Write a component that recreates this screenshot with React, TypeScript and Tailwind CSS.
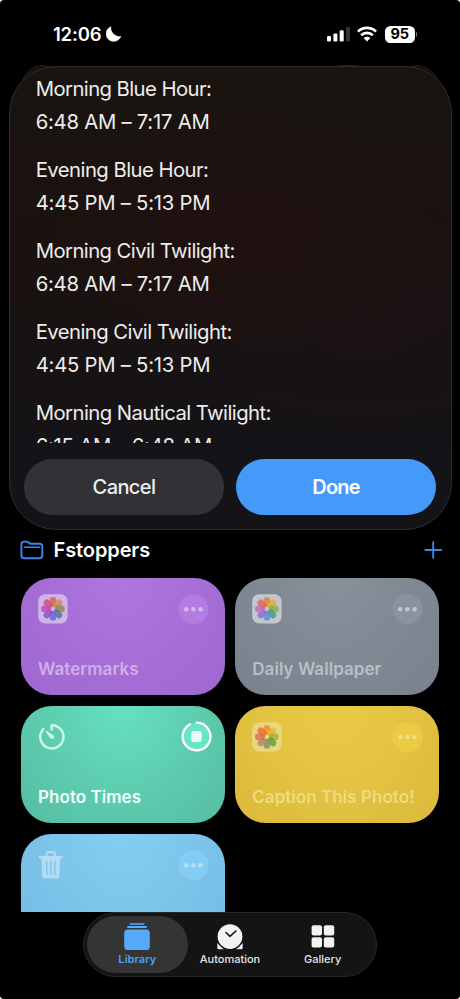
import React from "react";

const times = [
  { label: "Morning Blue Hour:", value: "6:48 AM – 7:17 AM", ls: "tracking-[-0.57px]" },
  { label: "Evening Blue Hour:", value: "4:45 PM – 5:13 PM", ls: "tracking-[-0.54px]" },
  { label: "Morning Civil Twilight:", value: "6:48 AM – 7:17 AM", ls: "tracking-[-0.57px]" },
  { label: "Evening Civil Twilight:", value: "4:45 PM – 5:13 PM", ls: "tracking-[-0.55px]" },
  { label: "Morning Nautical Twilight:", value: "6:15 AM – 6:48 AM", ls: "tracking-[-0.55px]" },
];

type Petals = string[];

const purplePetals: Petals = ["#d9694f", "#cf8f52", "#8e8a5c", "#5d7396", "#6470dc", "#8a55cf", "#c04cc0", "#cf4f8c"];
const grayPetals: Petals = ["#e08a3c", "#dcae3a", "#8fae48", "#4a9c80", "#5c8fd6", "#8a72cc", "#bf6fb8", "#d8686c"];
const yellowPetals: Petals = ["#ec9030", "#ecb62e", "#9db23c", "#6aa03a", "#84946a", "#b58a70", "#dd7458", "#e4703c"];

function PhotosIcon({ petals, tile }: { petals: Petals; tile: string }) {
  return (
    <svg width="30" height="30" viewBox="0 0 30 30">
      <rect x="0.2" y="0.2" width="29.4" height="29.4" rx="7" fill={tile} />
      {petals.map((color, i) => (
        <rect
          key={i}
          x="11.6"
          y="3"
          width="6.600"
          height="10"
          rx="3.300"
          fill={color}
          opacity="0.85"
          transform={`rotate(${i * 45} 14.9 14.9)`}
        />
      ))}
      <circle cx="14.9" cy="14.9" r="1.900" fill={tile} />
    </svg>
  );
}

function TimerIcon() {
  return (
    <svg width="30" height="30" viewBox="0 0 30 30" fill="none" stroke="#cdf5e8" strokeWidth="2.500" strokeLinecap="round" strokeLinejoin="round">
      <path d="M13.700 7.400V3.200A11.600 11.600 0 1 1 5.400 6.900" />
      <path d="M7.900 9.200c.4-.5.900-.4 1.300-.1l5.900 4.200a2 2 0 1 1-2.700 2.700L8 10.400c-.3-.4-.4-.8-.1-1.200Z" fill="#cdf5e8" stroke="none" />
    </svg>
  );
}

function TrashIcon() {
  return (
    <svg width="30" height="30" viewBox="0 0 30 30" fill="none">
      <path d="M8.600 6V4c0-1.300.8-2 2-2h4.300c1.200 0 2 .7 2 2v2" stroke="#b3dcf2" strokeWidth="1.900" />
      <path d="M1.700 7.200h22.200" stroke="#b3dcf2" strokeWidth="2.200" strokeLinecap="round" />
      <path d="M3.200 7h19.200l-1 19c-.1 1.700-1.100 2.600-2.800 2.600H7c-1.700 0-2.700-.9-2.800-2.600Z" fill="#b3dcf2" />
      <path d="M8.500 11.200l.4 13.200M12.800 11.200v13.200M17.100 11.200l-.4 13.200" stroke="#7cc3ea" strokeWidth="1.300" strokeLinecap="round" />
    </svg>
  );
}

function MoreButton({ bg, dot }: { bg: string; dot: string }) {
  return (
    <svg width="31" height="31" viewBox="0 0 31 31">
      <circle cx="15.500" cy="15.200" r="15" fill={bg} />
      <circle cx="8.200" cy="15.200" r="2.300" fill={dot} />
      <circle cx="15.400" cy="15.200" r="2.300" fill={dot} />
      <circle cx="22.600" cy="15.200" r="2.300" fill={dot} />
    </svg>
  );
}

function RunningButton() {
  return (
    <svg width="31" height="31" viewBox="0 0 31 31" className="-mt-px -mr-[3px]" fill="none">
      <circle cx="15.500" cy="15.500" r="13.500" fill="#68e5c6" />
      <path d="M15.500 1.600A13.900 13.900 0 1 1 9.100 3.200" stroke="#fff" strokeWidth="2.300" strokeLinecap="round" />
      <rect x="10.100" y="10.100" width="10.800" height="10.800" rx="2.600" fill="#e6fbf5" />
    </svg>
  );
}

function Card({ title, bg, text, icon, action }: {
  title: string; bg: string; text: string; icon: React.ReactNode; action: React.ReactNode;
}) {
  return (
    <div className={`flex h-[117px] flex-col justify-between rounded-[31px] pt-4 pr-4 pb-[13px] pl-[17px] ${bg}`}>
      <div className="flex items-start justify-between">
        {icon}
        {action}
      </div>
      <div className={`text-[17px] leading-[25px] font-semibold tracking-[0.05px] whitespace-nowrap ${text}`}>{title}</div>
    </div>
  );
}

function StatusBar() {
  return (
    <header className="flex h-[66px] shrink-0 items-start justify-between pt-[22px] pr-[43px] pl-[53px]">
      <div className="flex items-center">
        <span className="w-[51px] text-[18.500px] leading-6 font-semibold tracking-[-0.200px]">12:06</span>
        <svg width="18" height="18" viewBox="0 0 18 18" className="ml-0.5">
          <path d="M4.800 1.700A7.600 7.600 0 1 0 14.800 11.500C9.800 12.700 3.900 7.300 4.800 1.700Z" fill="#fff" stroke="#fff" strokeWidth="0.600" strokeLinejoin="round" />
        </svg>
      </div>
      <div className="flex h-6 items-center">
        <svg width="24" height="16" viewBox="0 0 24 16" fill="#fff">
          <rect x="0" y="10" width="4" height="5.500" rx="1.200" />
          <rect x="6.400" y="7.600" width="4" height="7.900" rx="1.200" />
          <rect x="12.700" y="4.300" width="4" height="11.200" rx="1.200" />
          <rect x="19" y="1" width="4" height="14.500" rx="1.200" fill="#333" />
        </svg>
        <svg width="20" height="16" viewBox="0 0 20 16" className="ml-[6px]" fill="none" stroke="#fff" strokeWidth="2.700">
          <path d="M1 5.600a12.800 12.800 0 0 1 18 0" />
          <path d="M4.200 9.300a8.200 8.200 0 0 1 11.600 0" />
          <path d="M6.700 12.100a4.700 4.700 0 0 1 6.600 0L10 15.600Z" fill="#fff" stroke="none" />
        </svg>
        <div className="ml-2 flex h-[17px] w-[29.500px] items-center justify-center rounded-[5.500px] bg-white text-[14.500px] leading-4 font-bold tracking-[-0.200px] text-black">95</div>
        <div className="ml-px h-[5px] w-[1.500px] rounded-r-full bg-[#777]" />
      </div>
    </header>
  );
}

function ResultDialog() {
  return (
    <section className="relative mx-[8.500px] flex h-[464px] shrink-0 flex-col rounded-[47px] border border-[#302c2b] bg-[radial-gradient(ellipse_190px_130px_at_52%_36%,#20110f_0%,#20110f00_100%),radial-gradient(ellipse_150px_140px_at_80%_52%,#1d111580_0%,#1d111500_100%),linear-gradient(180deg,#191411_0%,#1b120f_35%,#171214_65%,#141318_85%,#141417_100%)]">
      <div className="h-[376px] overflow-hidden pt-[4.500px] pl-[26.200px] text-[20.300px] leading-[33px] text-[#ededec]">
        {times.map((t) => (
          <div key={t.label} className="mb-[15px] whitespace-nowrap">
            <div className={t.ls}>{t.label}</div>
            <div className="tracking-[-0.250px]">{t.value}</div>
          </div>
        ))}
      </div>
      <div className="mt-[15.600px] flex gap-3 px-[14.500px] text-[20px] leading-[56px]">
        <button className="h-[56.700px] flex-1 rounded-full bg-[#323136] font-medium tracking-[-0.600px] text-[#ededee]">Cancel</button>
        <button className="h-[56.700px] flex-1 rounded-full bg-[#4599f9] font-semibold tracking-[-0.800px]">Done</button>
      </div>
    </section>
  );
}

function TabBar() {
  return (
    <nav className="ml-[83px] flex h-[65px] w-[294px] shrink-0 rounded-full border border-[#282828] bg-[#141414] p-[3px] text-[11px] leading-[14px] font-medium text-[#e6e6e6]">
      <div className="flex h-[57px] w-[101px] flex-col items-center rounded-full bg-[#343434] pt-[6px] text-[#4ba0f6]">
        <svg width="26" height="29" viewBox="0 0 26 29" fill="#55a9fb">
          <rect x="5.500" y="1.200" width="15" height="1.600" rx="0.800" />
          <rect x="3" y="4.100" width="20" height="2" rx="1" />
          <rect x="0.200" y="7.600" width="25.600" height="20.400" rx="3.600" />
        </svg>
        <div className="mt-px font-semibold tracking-[0.050px]">Library</div>
      </div>
      <div className="flex w-[85px] flex-col items-center pt-[6px]">
        <svg width="26" height="29" viewBox="0 0 26 29">
          <path d="M0.600 21.500L6.500 26.900H1.600c-.7 0-1-.3-1-1ZM25.400 21.500L19.500 26.900h4.900c.7 0 1-.3 1-1Z" fill="#f2f2f2" stroke="#f2f2f2" strokeWidth="0.500" />
          <circle cx="13" cy="14.600" r="13" fill="#f2f2f2" stroke="#141414" strokeWidth="1.200" />
          <path d="M9 10.500L13 14.400L19 9" fill="none" stroke="#141414" strokeWidth="1.600" strokeLinecap="round" strokeLinejoin="round" />
        </svg>
        <div className="mt-px">Automation</div>
      </div>
      <div className="flex w-[101px] flex-col items-center pt-[6px]">
        <svg width="26" height="29" viewBox="0 0 26 29" fill="#f2f2f2">
          <rect x="1.600" y="3.300" width="10.400" height="10.300" rx="2" />
          <rect x="13.800" y="3.300" width="10.400" height="10.300" rx="2" />
          <rect x="1.600" y="15.300" width="10.400" height="10.300" rx="2" />
          <rect x="13.800" y="15.300" width="10.400" height="10.300" rx="2" />
        </svg>
        <div className="mt-px">Gallery</div>
      </div>
    </nav>
  );
}

export default function App() {
  return (
    <div className="h-[999px] w-[460px] bg-white">
      <div className="relative flex h-full flex-col overflow-hidden rounded-[4px] bg-black font-[Inter,'Liberation_Sans',sans-serif] text-white">
        <div className="absolute top-[64.500px] left-[21px] size-11 rounded-full border border-[#1f1f1f] bg-[#121212]" />
        <div className="absolute top-[64.500px] left-[326px] h-11 w-[44px] rounded-[16px] border border-[#1d1d1d] bg-[#121212]" />
        <div className="absolute top-[64.500px] left-[395px] size-11 rounded-full border border-[#1d1d1d] bg-[#121212]" />
        <StatusBar />
        <ResultDialog />
        <div className="flex h-[47.600px] shrink-0 items-center pr-[18px] pb-[8px] pl-5">
          <svg width="24" height="20" viewBox="0 0 24 20" fill="none" stroke="#3b87ee" strokeWidth="1.900" strokeLinecap="round" strokeLinejoin="round">
            <path d="M1.400 4.200c0-1.700.9-2.600 2.600-2.600h2.500c.9 0 1.400.3 2 .8l.6.600c.5.500 1 .7 1.800.7H19.700c1.700 0 2.600.9 2.600 2.600V15.600c0 1.700-.9 2.600-2.600 2.600H4c-1.700 0-2.600-.9-2.600-2.600Z" />
            <path d="M4.300 7.200H19.500" strokeWidth="1.400" />
          </svg>
          <h2 className="ml-[9.500px] text-[20px] leading-6 font-semibold tracking-[-0.100px]">Fstoppers</h2>
          <svg width="18" height="18" viewBox="0 0 18 18" className="ml-auto" stroke="#3b87ee" strokeWidth="1.900" strokeLinecap="round">
            <path d="M9.200 1.300V16.700M1.400 9H17" />
          </svg>
        </div>
        <main className="grid h-[334.400px] shrink-0 grid-cols-2 content-start gap-x-[10.500px] gap-y-[11.400px] overflow-hidden pr-[21px] pl-[21px]">
          <Card title="Watermarks" text="text-[#cfaee9]"
            bg="bg-[radial-gradient(ellipse_at_50%_0%,#af76df_0%,#a76ed8_50%,#9f67d0_100%)]"
            icon={<PhotosIcon petals={purplePetals} tile="#d0b4e5" />} action={<MoreButton bg="#b27ce0" dot="#d6b9ec" />} />
          <Card title="Daily Wallpaper" text="text-[#b9bec5]"
            bg="bg-[radial-gradient(ellipse_at_50%_0%,#88909b_0%,#808993_50%,#79818d_100%)]"
            icon={<PhotosIcon petals={grayPetals} tile="#c4c8ce" />} action={<MoreButton bg="#8b929d" dot="#c3c7cd" />} />
          <Card title="Photo Times" text="text-[#f5fefb]"
            bg="bg-[radial-gradient(ellipse_at_50%_0%,#66e0c1_0%,#5ecdb0_50%,#56bda1_100%)]"
            icon={<TimerIcon />} action={<RunningButton />} />
          <Card title="Caption This Photo!" text="text-[#efdb7d]"
            bg="bg-[radial-gradient(ellipse_at_50%_0%,#e9c945_0%,#e3c341_50%,#dbb93c_100%)]"
            icon={<PhotosIcon petals={yellowPetals} tile="#e9d77c" />} action={<MoreButton bg="#ebcb43" dot="#f0df83" />} />
          <Card title="Empty Trash" text="text-[#b3dcf2]"
            bg="bg-[radial-gradient(ellipse_at_50%_0%,#85cdf0_0%,#7cc4ea_50%,#75bbe4_100%)]"
            icon={<TrashIcon />} action={<MoreButton bg="#83cdf5" dot="#b8e0f5" />} />
        </main>
        <TabBar />
      </div>
    </div>
  );
}
